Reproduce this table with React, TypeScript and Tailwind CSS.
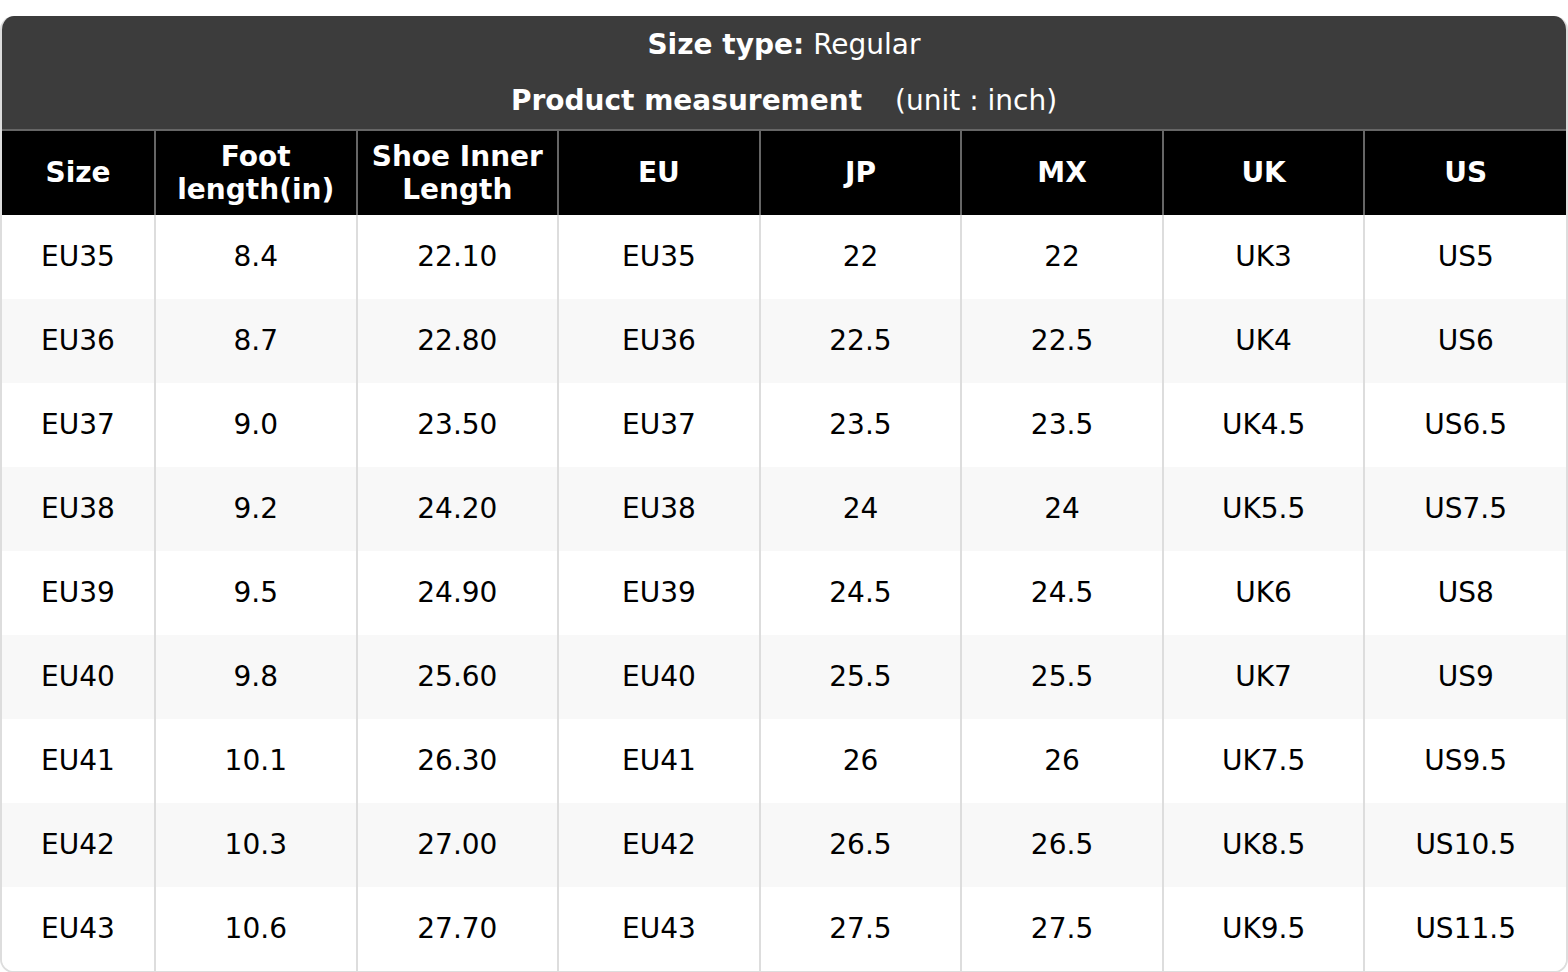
const cols = ['Size', 'Foot length(in)', 'Shoe Inner Length', 'EU', 'JP', 'MX', 'UK', 'US']

const rows = [
  ['EU35', '8.4', '22.10', 'EU35', '22', '22', 'UK3', 'US5'],
  ['EU36', '8.7', '22.80', 'EU36', '22.5', '22.5', 'UK4', 'US6'],
  ['EU37', '9.0', '23.50', 'EU37', '23.5', '23.5', 'UK4.5', 'US6.5'],
  ['EU38', '9.2', '24.20', 'EU38', '24', '24', 'UK5.5', 'US7.5'],
  ['EU39', '9.5', '24.90', 'EU39', '24.5', '24.5', 'UK6', 'US8'],
  ['EU40', '9.8', '25.60', 'EU40', '25.5', '25.5', 'UK7', 'US9'],
  ['EU41', '10.1', '26.30', 'EU41', '26', '26', 'UK7.5', 'US9.5'],
  ['EU42', '10.3', '27.00', 'EU42', '26.5', '26.5', 'UK8.5', 'US10.5'],
  ['EU43', '10.6', '27.70', 'EU43', '27.5', '27.5', 'UK9.5', 'US11.5'],
]

export default function App() {
  return (
    <div className="bg-white pt-4 font-['DejaVu_Sans',sans-serif] text-[28px]">
      <div className="overflow-hidden rounded-[14px] border-2 border-t-0 border-[#ddd]">
        <div className="flex h-[113px] flex-col items-center bg-[#3c3c3c] pt-[1px] text-white">
          <div className="flex h-[56px] items-center">
            <span className="font-bold">Size type:</span>
            <span className="ml-[9px]">Regular</span>
          </div>
          <div className="flex h-[56px] items-center">
            <span className="font-bold">Product measurement</span>
            <span className="ml-[33px]">(unit : inch)</span>
          </div>
        </div>
        <table className="w-full table-fixed border-collapse">
          <colgroup>
            <col className="w-[153px]" />
          </colgroup>
          <thead>
            <tr className="h-[85px] bg-black text-white">
              {cols.map(c => (
                <th key={c} className="border-2 border-b-0 border-[#666] px-2 pb-[1px] font-bold leading-[33px] first:border-l-0 last:border-r-0">
                  {c === 'Foot length(in)' ? <>Foot<br />length(in)</> : c === 'Shoe Inner Length' ? <>Shoe Inner<br />Length</> : c}
                </th>
              ))}
            </tr>
          </thead>
          <tbody>
            {rows.map((r, i) => (
              <tr key={i} className={`h-[84px] ${i % 2 ? 'bg-[#f8f8f8]' : 'bg-white'}`}>
                {r.map((v, j) => (
                  <td key={j} className="border-x-2 border-[#ddd] text-center text-black first:border-l-0 last:border-r-0">
                    {v}
                  </td>
                ))}
              </tr>
            ))}
          </tbody>
        </table>
      </div>
    </div>
  )
}
